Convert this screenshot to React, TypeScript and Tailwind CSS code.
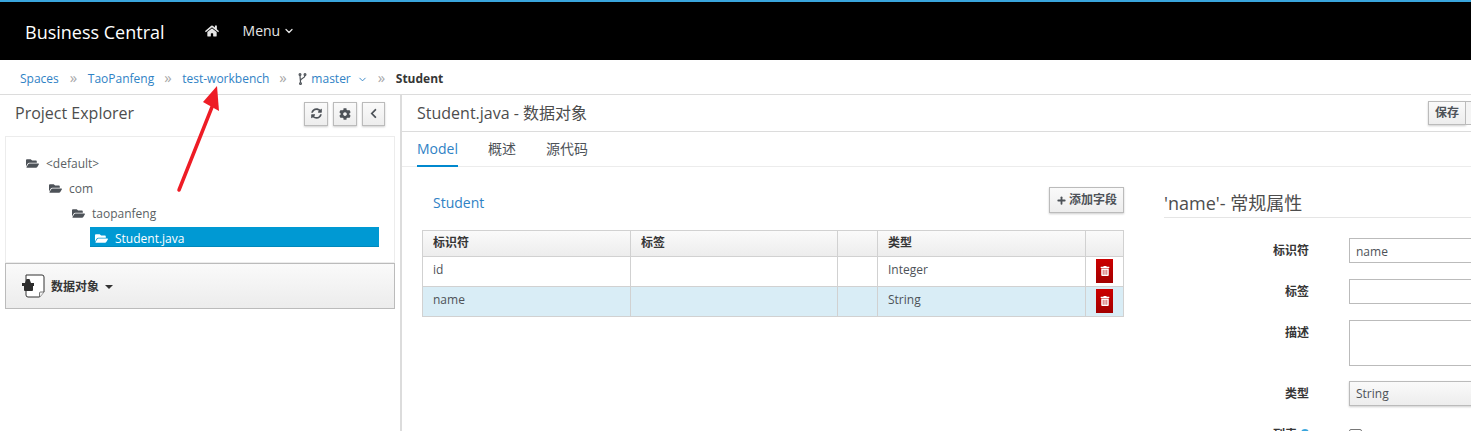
import { ChevronDown, Plus } from "lucide-react";
import { FaCog, FaFolderOpen, FaHome, FaSyncAlt, FaTrashAlt, FaChevronLeft } from "react-icons/fa";

const cjk = "font-['Open_Sans','Noto_Sans_CJK_SC',sans-serif]";

const Sep = () => <span className="mb-[3px] w-[8px] text-[15px] leading-none text-[#a8a8a8]">»</span>;

const ToolButton = ({ children, w = "w-[24px]" }: { children: React.ReactNode; w?: string }) => (
  <button className={`flex h-[24px] ${w} items-center justify-center border border-[#bbb] bg-gradient-to-b from-[#fafafa] to-[#ededed] text-[#4d5258] shadow-[0_1px_2px_rgba(0,0,0,0.2)]`}>
    {children}
  </button>
);

const tree = [
  { name: "<default>", pad: "pl-[20px]" },
  { name: "com", pad: "pl-[43px]" },
  { name: "taopanfeng", pad: "pl-[66px]" },
];

const rows = [
  { id: "id", type: "Integer", selected: false },
  { id: "name", type: "String", selected: true },
];

const cols = "grid-cols-[208px_207px_40px_208px_38px]";

const FormRow = ({ label, children, h = "h-[25px]", mb = "mb-[16px]" }: { label: string; children: React.ReactNode; h?: string; mb?: string }) => (
  <div className={`flex ${mb}`}>
    <div className="w-[145px] pt-[4px] pr-0 text-right text-[12px] font-semibold leading-[18px] text-[#363636]">{label}</div>
    <div className={`ml-[40px] w-[200px] shrink-0 ${h}`}>{children}</div>
  </div>
);

export default function App() {
  return (
    <div className={`${cjk} relative h-[431px] w-[1471px] overflow-hidden bg-white text-[12px] text-[#4d5258]`}>
      <header className="flex h-[60px] items-center border-t-2 border-[#39a5dc] bg-black text-white">
        <span className="ml-[25px] mt-[2px] text-[18px] leading-none">Business Central</span>
        <FaHome className="ml-[40px] text-[14px] text-[#e6e6e6]" />
        <span className="ml-[24px] mb-[1px] flex items-center gap-[3px] text-[14px] text-[#e6e6e6]">
          Menu <ChevronDown size={12} strokeWidth={2.5} />
        </span>
      </header>

      <nav className="flex h-[35px] items-center gap-[10px] border-b border-[#dcdcdc] pl-[20px] pt-[4px] text-[12px] text-[#2f82c5]">
        <span className="mr-[1px]">Spaces</span>
        <Sep />
        <span>TaoPanfeng</span>
        <Sep />
        <span>test-workbench</span>
        <Sep />
        <span className="ml-[1px] flex items-center gap-[4px]">
          <svg width="9" height="12" viewBox="0 0 9 12" fill="none" stroke="#4d5258" strokeWidth="1.2">
            <circle cx="2" cy="1.5" r="0.9" />
            <circle cx="7" cy="1.5" r="0.9" />
            <circle cx="2.5" cy="10.5" r="0.9" />
            <path d="M2 2.5L2.5 9.5" />
            <path d="M7 2.5C7 5.5 3 5 2.4 7.5" />
          </svg>
          master
          <ChevronDown size={11} className="ml-[2px]" />
        </span>
        <Sep />
        <span className="font-bold text-[#363636]">Student</span>
      </nav>

      <div className="flex">
        <aside className="h-[336px] w-[402px] shrink-0 border-r-2 border-[#dcdcdc]">
          <div className="flex h-[37px] items-center pl-[15px] pr-[15px]">
            <span className="mb-[2px] text-[16px] text-[#4d4d4d]">Project Explorer</span>
            <div className="ml-auto flex gap-[5px]">
              <ToolButton><FaSyncAlt className="text-[11px]" /></ToolButton>
              <ToolButton><FaCog className="text-[12px]" /></ToolButton>
              <ToolButton w="w-[23px]"><FaChevronLeft className="text-[11px]" /></ToolButton>
            </div>
          </div>
          <div className="mx-[5px] mt-[4px] h-[127px] w-[390px] border border-[#ececec] pt-[14px]">
            {tree.map((n) => (
              <div key={n.name} className={`flex h-[25px] items-center gap-[7px] ${n.pad} text-[12px] text-[#5a5f64]`}>
                <FaFolderOpen className="text-[13px] text-[#4d5258]" />
                {n.name}
              </div>
            ))}
            <div className="ml-[84px] mt-[1px] flex h-[20px] w-[289px] items-center gap-[7px] border-b border-[#0088bb] bg-[#0099d3] pl-[5px] pt-[4px] text-white">
              <FaFolderOpen className="text-[13px]" />
              Student.java
            </div>
          </div>
          <div className="mx-[5px] flex h-[46px] w-[390px] items-center border border-[#bbb] bg-gradient-to-b from-[#fafafa] to-[#ececec] pl-[16px] text-[#363636]">
            <svg width="23" height="24" viewBox="0 0 23 24" className="shrink-0">
              <path d="M4 1h16a2 2 0 0 1 2 2v15l-4.5 5H6a2 2 0 0 1-2-2z" fill="#fff" stroke="#333" />
              <path d="M17.5 23v-4a1 1 0 0 1 1-1H22" fill="#f2f2f2" stroke="#555" strokeWidth="0.8" />
              <path d="M4.5 5h3l1.5 4h3v3H0V9h3z" fill="#2d2d2d" />
              <path d="M2 12h9v4a1 1 0 0 1-1 1H3a1 1 0 0 1-1-1z" fill="#2d2d2d" />
            </svg>
            <span className="ml-[6px] pt-[2px] text-[12px] font-semibold">数据对象</span>
            <span className="ml-[6px] mt-[2px] h-0 w-0 border-x-[4px] border-t-[4px] border-x-transparent border-t-[#333]" />
          </div>
        </aside>

        <main className="min-w-0 flex-1">
          <div className="flex h-[37px] items-center border-b border-[#dcdcdc] pl-[15px]">
            <span className="mb-[1px] text-[16px] text-[#4d4d4d]">Student.java - 数据对象</span>
            <div className="ml-auto flex w-[43px] shrink-0 items-center self-start pt-[6px]">
              <button className="h-[24px] w-[38px] shrink-0 border border-[#bbb] bg-gradient-to-b from-[#fafafa] to-[#ededed] text-[12px] font-semibold text-[#4d5258] shadow-[0_1px_2px_rgba(0,0,0,0.2)]">保存</button>
              <div className="h-[24px] w-[5px] shrink-0 border-y border-[#bbb] bg-[#f4f4f4]" />
            </div>
          </div>
          <div className="flex h-[35px] gap-[30px] border-b border-[#ececec] pl-[15px] text-[14px]">
            <div className="flex h-[35px] items-center border-b-2 border-[#0088ce] text-[#2f82c5]">Model</div>
            <div className="flex h-[34px] items-center pb-[2px]">概述</div>
            <div className="flex h-[34px] items-center pb-[2px]">源代码</div>
          </div>

          <div className="flex">
            <section className="ml-[20px] mt-[20px] w-[702px] shrink-0">
              <div className="flex h-[25px] items-center justify-between">
                <span className="ml-[11px] mt-[5px] text-[14px] text-[#2f82c5]">Student</span>
                <button className="flex h-[26px] w-[75px] items-center justify-center gap-[2px] border border-[#bbb] bg-gradient-to-b from-[#fafafa] to-[#ededed] pt-[1px] text-[12px] font-semibold text-[#4d5258] shadow-[0_1px_2px_rgba(0,0,0,0.2)]">
                  <Plus size={11} strokeWidth={4} />
                  添加字段
                </button>
              </div>
              <div className="mt-[18px] border border-[#d1d1d1] border-b-0">
                <div className={`grid h-[26px] ${cols} border-b border-[#d1d1d1] bg-gradient-to-b from-[#fafafa] to-[#ededed] text-[12px] font-semibold text-[#363636]`}>
                  <div className="flex items-center border-r border-[#d1d1d1] pb-[2px] pl-[10px]">标识符</div>
                  <div className="flex items-center border-r border-[#d1d1d1] pb-[2px] pl-[10px]">标签</div>
                  <div className="border-r border-[#d1d1d1]" />
                  <div className="flex items-center border-r border-[#d1d1d1] pb-[2px] pl-[10px]">类型</div>
                  <div />
                </div>
                {rows.map((r) => (
                  <div key={r.id} className={`grid h-[30px] ${cols} border-b border-[#d1d1d1] ${r.selected ? "bg-[#d9edf6]" : "bg-white"}`}>
                    <div className="border-r border-[#d1d1d1] pl-[10px] pt-[4px] leading-[18px]">{r.id}</div>
                    <div className="border-r border-[#d1d1d1]" />
                    <div className="border-r border-[#d1d1d1]" />
                    <div className="border-r border-[#d1d1d1] pl-[10px] pt-[4px] leading-[18px]">{r.type}</div>
                    <div className="pl-[10px] pt-[2px]">
                      <div className="flex h-[24px] w-[17px] items-center justify-center bg-gradient-to-b from-[#cc0000] to-[#a30000] text-white">
                        <FaTrashAlt className="text-[10px]" />
                      </div>
                    </div>
                  </div>
                ))}
              </div>
            </section>

            <section className="ml-[40px] mt-[20px] w-[400px] shrink-0">
              <h3 className="mb-[20px] h-[31px] border-b border-[#e5e5e5] text-[18px] leading-[33px] font-normal text-[#4d4d4d]">'name'- 常规属性</h3>
              <FormRow label="标识符">
                <div className="flex h-full items-center border border-[#bbb] pl-[6px] pt-[2px]">name</div>
              </FormRow>
              <FormRow label="标签">
                <div className="h-full border border-[#bbb]" />
              </FormRow>
              <FormRow label="描述" h="h-[46px]" mb="mb-[15px]">
                <div className="h-full border border-[#bbb]" />
              </FormRow>
              <FormRow label="类型" mb="mb-[20px]">
                <div className="flex h-full items-center border border-[#bbb] bg-gradient-to-b from-[#fafafa] to-[#ededed] pl-[6px] shadow-[0_1px_2px_rgba(0,0,0,0.2)]">String</div>
              </FormRow>
              <div className="flex">
                <div className="flex w-[145px] items-start justify-end gap-[4px] text-[12px] font-semibold leading-[18px] text-[#363636]">
                  列表
                  <span className="mt-[3px] h-[8px] w-[8px] rounded-full bg-[#39a5dc]" />
                </div>
                <div className="ml-[40px] mt-[3px] h-[11px] w-[13px] rounded-[2px] border border-[#777]" />
              </div>
            </section>
          </div>
        </main>
      </div>

      {/* arrow drawn on the screenshot */}
      <svg className="absolute left-[170px] top-[85px]" width="60" height="112" viewBox="0 0 60 112">
        <path d="M9 105L42 22" stroke="#ee1c25" strokeWidth="3.5" strokeLinecap="round" fill="none" />
        <path d="M47 1L33 17l16 9z" fill="#ee1c25" />
      </svg>
    </div>
  );
}
